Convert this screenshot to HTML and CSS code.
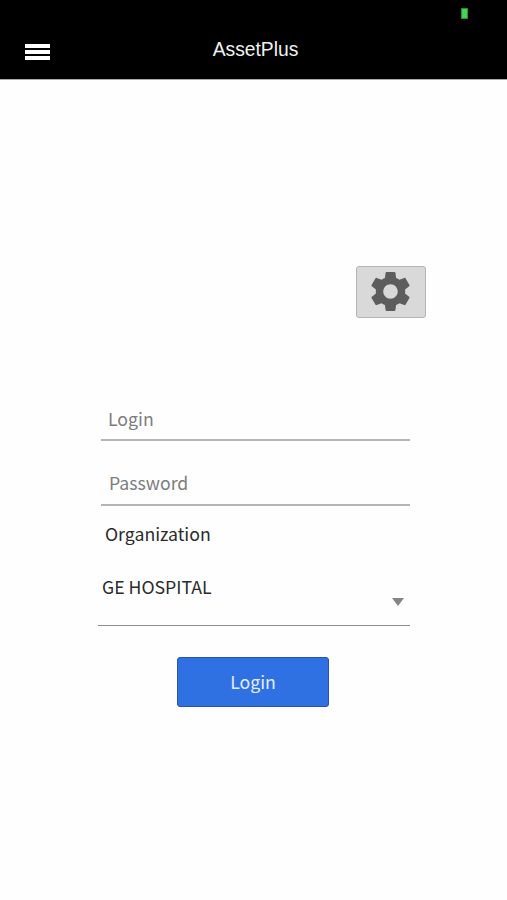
FILE: index.html
```html
<!DOCTYPE html>
<html lang="en">
<head>
    <meta charset="UTF-8">
    <meta name="viewport" content="width=device-width, initial-scale=1.0">
    <title>AssetPlus</title>
    <link rel="stylesheet" href="styles.css">
</head>
<body>

<header class="topbar">
    <div class="status-row"><span class="battery"></span></div>
    <div class="nav-row">
        <button class="menu-btn" aria-label="Menu">
            <span></span>
            <span></span>
            <span></span>
        </button>
        <h1 class="title">AssetPlus</h1>
    </div>
</header>

<main class="content">
    <button class="settings-btn" aria-label="Settings">
        <svg viewBox="0 0 24 24" width="47" height="47">
            <path fill="#5d5d5d" d="M19.43 12.98c.04-.32.07-.64.07-.98s-.03-.66-.07-.98l2.11-1.65c.19-.15.24-.42.12-.64l-2-3.46c-.12-.22-.39-.3-.61-.22l-2.49 1c-.52-.4-1.08-.73-1.69-.98l-.38-2.65C14.46 2.18 14.25 2 14 2h-4c-.25 0-.46.18-.49.42l-.38 2.65c-.61.25-1.17.59-1.69.98l-2.49-1c-.23-.09-.49 0-.61.22l-2 3.46c-.13.22-.07.49.12.64l2.11 1.65c-.04.32-.07.65-.07.98s.03.66.07.98l-2.11 1.65c-.19.15-.24.42-.12.64l2 3.46c.12.22.39.3.61.22l2.49-1c.52.4 1.08.73 1.69.98l.38 2.65c.03.24.24.42.49.42h4c.25 0 .46-.18.49-.42l.38-2.65c.61-.25 1.17-.59 1.69-.98l2.49 1c.23.09.49 0 .61-.22l2-3.46c.12-.22.07-.49-.12-.64l-2.11-1.65zM12 15.7c-2.04 0-3.7-1.66-3.7-3.7s1.66-3.7 3.7-3.7 3.7 1.66 3.7 3.7-1.66 3.7-3.7 3.7z"/>
        </svg>
    </button>

    <form class="login-form">
        <input class="field" type="text" placeholder="Login">
        <input class="field password" type="password" placeholder="Password">
        <label class="org-label" for="org">Organization</label>
        <div class="select-box">
            <select id="org">
                <option selected>GE HOSPITAL</option>
            </select>
            <span class="arrow"></span>
        </div>
        <button class="login-btn" type="button">Login</button>
    </form>
</main>

</body>
</html>
```

FILE: styles.css
```css
* {
    box-sizing: border-box;
}
body {
    margin: 0;
    background-color: #fefefe;
    color: #2b2b2b;
    font-family: "Noto Sans CJK JP", "Noto Sans", sans-serif;
    font-size: 17.7px;
}
button {
    padding: 0;
    cursor: pointer;
}

/* header */
.topbar {
    height: 80px;
    background-color: #000;
    border-bottom: 1px solid #aaa;
}
.status-row {
    display: flex;
    justify-content: flex-end;
    height: 28px;
    padding: 8px 39px 0 0;
}
.battery {
    width: 7px;
    height: 11px;
    background-color: #43d455;
    border: 1px solid #248c30;
}
.nav-row {
    display: grid;
    grid-template-columns: 50px 1fr 46px;
    height: 42px;
}
.menu-btn {
    display: flex;
    flex-direction: column;
    gap: 2px;
    width: 25px;
    margin: 16px 0 0 25px;
    border: none;
    background: none;
}
.menu-btn span {
    width: 25px;
    height: 4px;
    flex: none;
    background-color: #fff;
}
.title {
    margin: 0;
    color: #f0f0f0;
    font-family: "Liberation Sans", Arial, sans-serif;
    font-size: 19.3px;
    font-weight: normal;
    line-height: 44px;
    text-align: center;
}

/* content */
.content {
    display: flex;
    flex-direction: column;
    padding: 186px 81px 0 98px;
}
.settings-btn {
    display: flex;
    align-items: center;
    justify-content: center;
    align-self: flex-end;
    width: 70px;
    height: 52px;
    padding: 0 1px 1px 0;
    border: 1px solid #b4b4b4;
    border-radius: 3px;
    background-color: #d9d9d9;
}
.login-form {
    display: flex;
    flex-direction: column;
    width: 313px;
    margin-top: 80px;
}
.field {
    width: 309px;
    height: 43px;
    margin: 0 0 0 3px;
    padding: 0 7px 2px;
    border: none;
    border-bottom: 2px solid #b5b5b5;
    background: none;
    color: inherit;
    font: inherit;
    outline: none;
}
.field.password {
    margin-top: 22px;
    padding-bottom: 3px;
    padding-left: 8px;
}
.field::placeholder {
    color: #7d7d7d;
    opacity: 1;
}
.org-label {
    margin: 13px 0 0 7px;
    line-height: 28px;
}
.select-box {
    display: flex;
    align-items: flex-start;
    width: 312px;
    height: 61px;
    margin-top: 18px;
    border-bottom: 1px solid #8e8e8e;
}
.select-box select {
    flex: 1;
    height: 41px;
    padding: 0 0 0 4px;
    border: none;
    background: none;
    color: inherit;
    font: inherit;
    appearance: none;
}
.arrow {
    margin: 33px 6px 0 0;
    border-left: 6px solid transparent;
    border-right: 6px solid transparent;
    border-top: 8px solid #858585;
}
.login-btn {
    width: 152px;
    height: 50px;
    margin: 31px 0 0 79px;
    padding-bottom: 3px;
    border: 1px solid #2553ae;
    border-radius: 3px;
    background-color: #2f70e2;
    color: #e3edff;
    font: inherit;
}
```
